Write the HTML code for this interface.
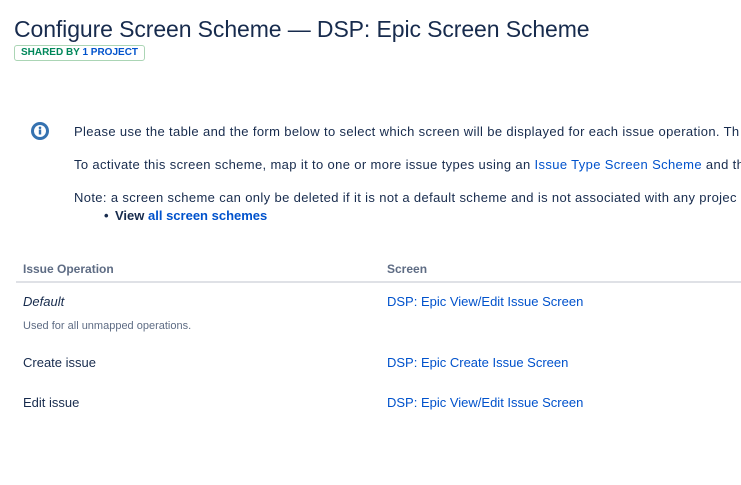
<!DOCTYPE html>
<html><head><style>
body{margin:0;width:741px;height:485px;overflow:hidden;background:#fff;font-family:"Liberation Sans",sans-serif;color:#172b4d;position:relative}
.a{position:absolute;white-space:nowrap}
h1{position:absolute;left:14px;top:16px;margin:0;font-size:23px;font-weight:normal;color:#172b4d;white-space:nowrap;letter-spacing:-0.1px}
.badge{left:14px;top:45px;width:129px;height:14px;border:1px solid #abd5b5;border-radius:3px;font-size:10px;font-weight:bold;color:#00875a;line-height:14px;text-align:center}
.t{font-size:13px;color:#172b4d}
.w{letter-spacing:0.36px}
a{color:#0052cc;text-decoration:none}
.h{font-size:12px;color:#5e6c84;font-weight:bold}
</style></head><body>
<h1>Configure Screen Scheme — DSP: Epic Screen Scheme</h1>
<div class="a badge">SHARED BY <span style="color:#0052cc">1 PROJECT</span></div>
<svg class="a" style="left:30px;top:121px" width="20" height="20" viewBox="0 0 20 20"><circle cx="10" cy="10" r="9" fill="#3572b0"/><circle cx="10" cy="10" r="6" fill="#fff"/><rect x="8.8" y="8.5" width="2.4" height="5" fill="#3572b0"/><circle cx="10" cy="6.8" r="1.3" fill="#3572b0"/></svg>
<div class="a t w" style="left:74px;top:124px">Please use the table and the form below to select which screen will be displayed for each issue operation. Th</div>
<div class="a t w" style="left:74px;top:157px">To activate this screen scheme, map it to one or more issue types using an <a>Issue Type Screen Scheme</a> and th</div>
<div class="a t w" style="left:74px;top:190px">Note: a screen scheme can only be deleted if it is not a default scheme and is not associated with any projec</div>
<div class="a t" style="left:104px;top:208px;font-weight:bold">•</div>
<div class="a t" style="left:115px;top:208px;font-weight:bold">View <a>all screen schemes</a></div>
<div class="a h" style="left:23px;top:262px">Issue Operation</div>
<div class="a h" style="left:387px;top:262px">Screen</div>
<div class="a" style="left:16px;top:281px;width:725px;height:2px;background:#dfe1e6"></div>
<div class="a t" style="left:23px;top:294px;font-style:italic">Default</div>
<div class="a" style="left:23px;top:320px;font-size:11px;color:#5e6c84">Used for all unmapped operations.</div>
<div class="a t" style="left:387px;top:294px"><a>DSP: Epic View/Edit Issue Screen</a></div>
<div class="a t" style="left:23px;top:355px">Create issue</div>
<div class="a t" style="left:387px;top:355px"><a>DSP: Epic Create Issue Screen</a></div>
<div class="a t" style="left:23px;top:395px">Edit issue</div>
<div class="a t" style="left:387px;top:395px"><a>DSP: Epic View/Edit Issue Screen</a></div>
</body></html>
